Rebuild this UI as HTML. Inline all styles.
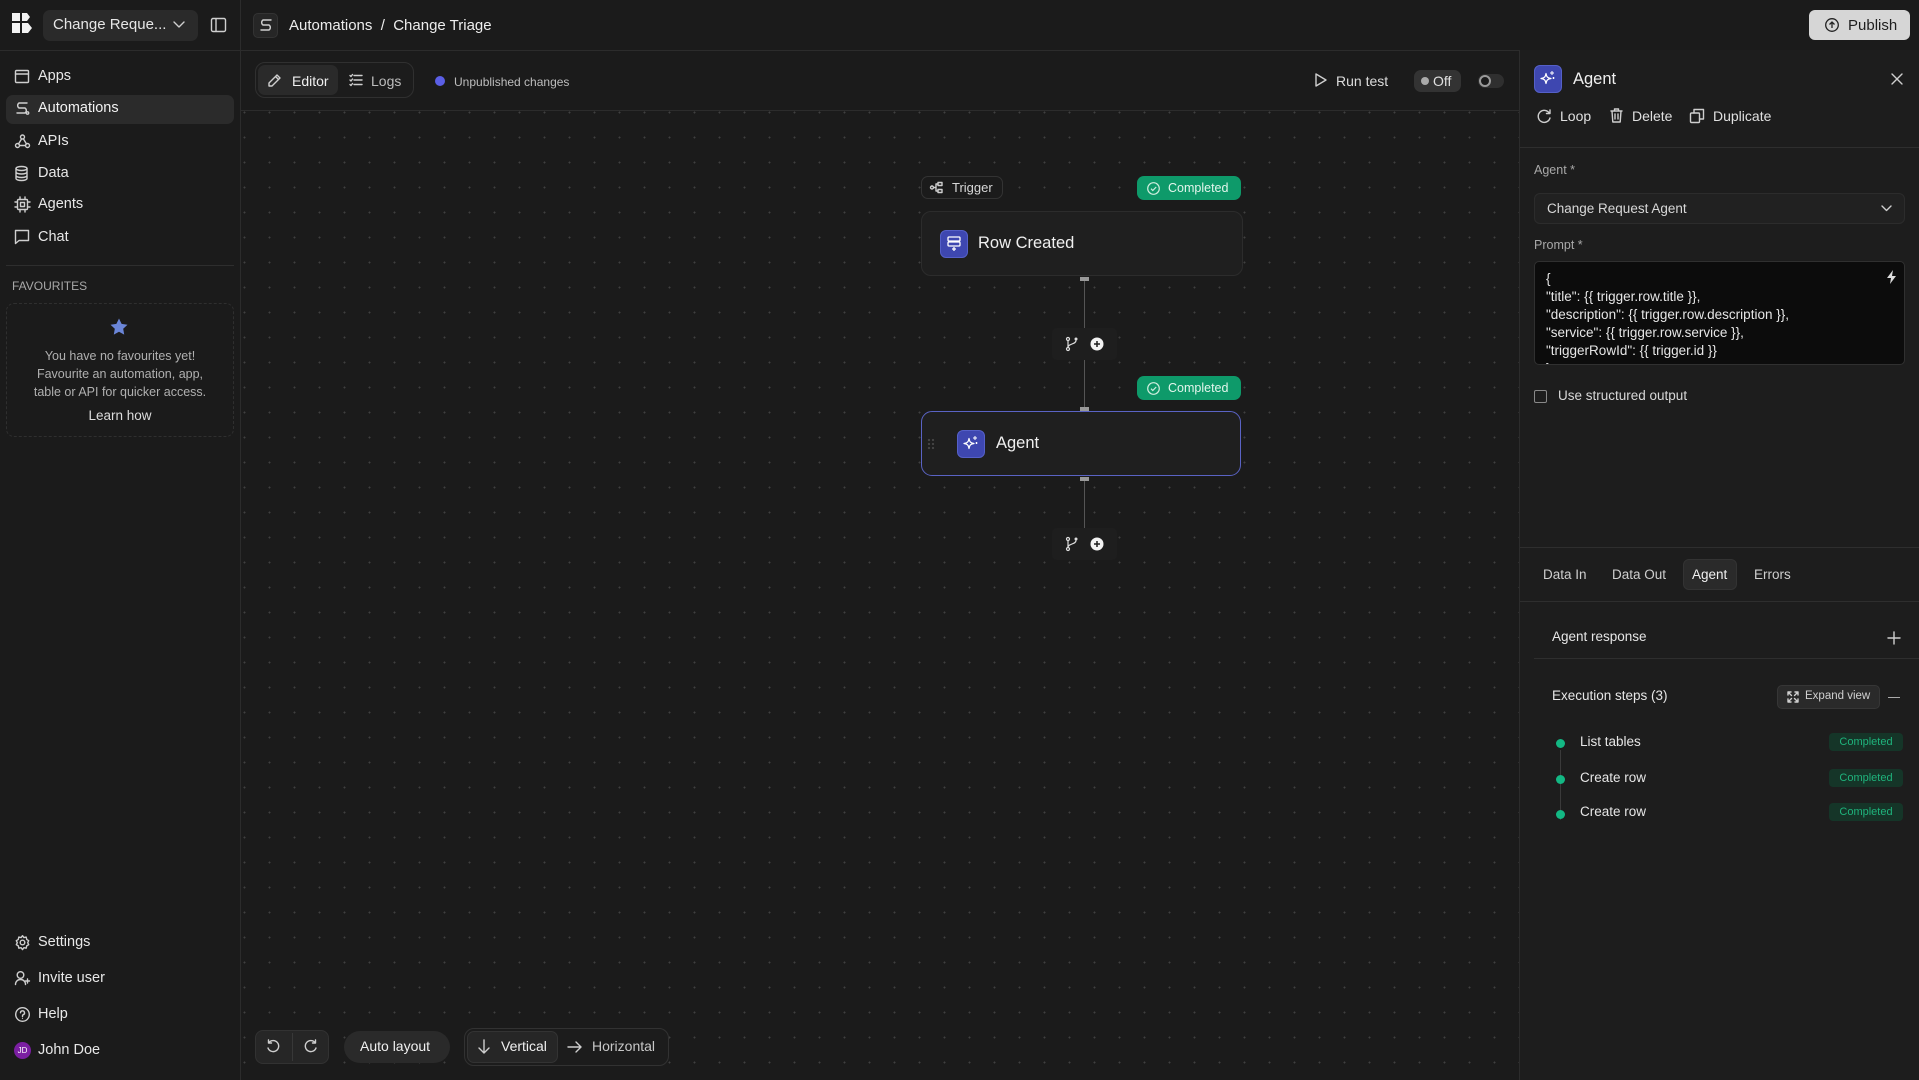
<!DOCTYPE html>
<html><head><meta charset="utf-8"><style>
*{box-sizing:border-box;margin:0;padding:0}
body{width:1919px;height:1080px;background:#1b1b1b;font-family:"Liberation Sans",sans-serif;color:#e8e8e8;position:relative;overflow:hidden}
.a{position:absolute}
.t{position:absolute;white-space:nowrap}
svg{position:absolute;overflow:visible}
.ic{fill:none;stroke:#cfcfcf;stroke-width:1.4;stroke-linecap:round;stroke-linejoin:round}
</style></head><body>
<div class="a" style="left:241px;top:111px;width:1278px;height:969px;background-image:radial-gradient(circle,#404040 0.8px,transparent 1.1px);background-size:25px 25px;background-position:-9px -11px"></div>
<div class="a" style="left:0;top:50px;width:1919px;height:1px;background:#2c2c2c"></div>
<div class="a" style="left:240px;top:0;width:1px;height:1080px;background:#2c2c2c"></div>
<div class="a" style="left:241px;top:110px;width:1278px;height:1px;background:#2c2c2c"></div>
<div class="a" style="left:1519px;top:50px;width:400px;height:1030px;background:#1d1d1d;border-left:1px solid #2c2c2c"></div>

<svg style="left:12px;top:13px" width="20" height="20"><path d="M0 0h8v8H0zM0 10h8v10H0zM10 0h5l3 4-3 4h-5zM10 10h6l4 5-4 5h-6z" fill="#f2f2f2"/></svg>
<div class="a" style="left:43px;top:10px;width:155px;height:31px;background:#2a2a2a;border-radius:7px"></div>
<div class="t" style="left:53px;top:16px;font-size:15px;color:#e6e6e6">Change Reque...</div>
<svg style="left:173px;top:21px" width="12" height="8"><path class="ic" d="M1 1l5 5 5-5"/></svg>
<svg style="left:211px;top:18px" width="15" height="14"><rect class="ic" x="0.5" y="0.5" width="14" height="13" rx="1.5"/><path class="ic" d="M5 1v12"/></svg>
<div class="a" style="left:253px;top:13px;width:25px;height:25px;background:#262626;border:1px solid #333;border-radius:5px"></div>
<svg style="left:259px;top:19px" width="14" height="13"><path class="ic" d="M12 1H4a3 3 0 0 0 0 5h6a3 3 0 0 1 0 5H2"/></svg>
<div class="t" style="left:289px;top:17px;font-size:15px;color:#ededed">Automations &nbsp;/&nbsp; Change Triage</div>
<div class="a" style="left:1809px;top:10px;width:101px;height:30px;background:#d6d6d6;border-radius:6px"></div>
<svg style="left:1825px;top:18px" width="14" height="14"><circle cx="7" cy="7" r="6.3" fill="none" stroke="#222" stroke-width="1.3"/><path d="M7 10V4M4.5 6.5L7 4l2.5 2.5" fill="none" stroke="#222" stroke-width="1.3"/></svg>
<div class="t" style="left:1848px;top:17px;font-size:15px;color:#1e1e1e">Publish</div>

<div class="a" style="left:6px;top:95px;width:228px;height:29px;background:#2b2b2b;border-radius:7px"></div>
<svg style="left:15px;top:70px" width="14" height="13"><rect class="ic" x="0.5" y="0.5" width="13" height="12" rx="1"/><path class="ic" d="M0.5 4h13"/></svg>
<div class="t" style="left:38px;top:68px;font-size:14.5px">Apps</div>
<svg style="left:15px;top:102px" width="14" height="13"><path class="ic" d="M12 1H4a3 3 0 0 0 0 5h6a3 3 0 0 1 0 5H2"/><circle class="ic" cx="12.5" cy="11" r="1.2"/></svg>
<div class="t" style="left:38px;top:100px;font-size:14.5px;color:#f2f2f2">Automations</div>
<svg style="left:15px;top:134px" width="15" height="14"><circle class="ic" cx="7.5" cy="3" r="2"/><circle class="ic" cx="2.5" cy="11.5" r="2"/><circle class="ic" cx="12.5" cy="11.5" r="2"/><path class="ic" d="M6.5 5L3.5 10M8.5 5l3 5M4.5 11.5h6"/></svg>
<div class="t" style="left:38px;top:133px;font-size:14.5px">APIs</div>
<svg style="left:15px;top:166px" width="13" height="15"><ellipse class="ic" cx="6.5" cy="2.5" rx="5.5" ry="2"/><path class="ic" d="M1 2.5v10c0 1.1 2.5 2 5.5 2s5.5-.9 5.5-2v-10M1 6c0 1.1 2.5 2 5.5 2S12 7.1 12 6M1 9.5c0 1.1 2.5 2 5.5 2s5.5-.9 5.5-2"/></svg>
<div class="t" style="left:38px;top:165px;font-size:14.5px">Data</div>
<svg style="left:15px;top:197px" width="15" height="15"><rect class="ic" x="2.5" y="2.5" width="10" height="10" rx="1"/><rect class="ic" x="5.5" y="5.5" width="4" height="4"/><path class="ic" d="M5 0v2.5M10 0v2.5M5 12.5V15M10 12.5V15M0 5h2.5M0 10h2.5M12.5 5H15M12.5 10H15"/></svg>
<div class="t" style="left:38px;top:196px;font-size:14.5px">Agents</div>
<svg style="left:15px;top:230px" width="14" height="14"><path class="ic" d="M0.5 0.5h13v10H4l-3.5 3z"/></svg>
<div class="t" style="left:38px;top:229px;font-size:14.5px">Chat</div>
<div class="a" style="left:6px;top:265px;width:228px;height:1px;background:#2e2e2e"></div>
<div class="t" style="left:12px;top:279px;font-size:12px;color:#a8a8a8">FAVOURITES</div>
<div class="a" style="left:6px;top:303px;width:228px;height:134px;border:1px dashed #2f2f2f;border-radius:8px"></div>
<svg style="left:110px;top:318px" width="18" height="18"><path d="M9 0.5l2.6 5.4 5.9.8-4.3 4.1 1 5.8L9 13.8l-5.2 2.8 1-5.8L.5 6.7l5.9-.8z" fill="#6b86d8"/></svg>
<div class="t" style="left:0;width:240px;text-align:center;top:347px;font-size:12.5px;color:#b0b0b0;line-height:18px">You have no favourites yet!<br>Favourite an automation, app,<br>table or API for quicker access.</div>
<div class="t" style="left:0;width:240px;text-align:center;top:408px;font-size:13.5px;color:#dcdcdc">Learn how</div>
<svg style="left:15px;top:935px" width="15" height="15"><circle class="ic" cx="7.5" cy="7.5" r="2.3"/><path class="ic" d="M7.5 0.7l1.4 1.9 2.3-.5.5 2.3 2 1.3-1 2 1 2-2 1.2-.5 2.3-2.3-.5-1.4 1.9-1.4-1.9-2.3.5-.5-2.3-2-1.2 1-2-1-2 2-1.3.5-2.3 2.3.5z"/></svg>
<div class="t" style="left:38px;top:934px;font-size:14.5px">Settings</div>
<svg style="left:15px;top:971px" width="15" height="14"><circle class="ic" cx="5.5" cy="4" r="3.3"/><path class="ic" d="M0.5 13.5c0-3 2.2-5 5-5s5 2 5 5M12.5 8v4M10.5 10h4"/></svg>
<div class="t" style="left:38px;top:970px;font-size:14.5px">Invite user</div>
<svg style="left:15px;top:1007px" width="15" height="15"><circle class="ic" cx="7.5" cy="7.5" r="6.8"/><path class="ic" d="M5.5 5.8a2 2 0 1 1 2.7 1.9c-.5.2-.7.6-.7 1.1v.7"/><circle cx="7.5" cy="11.3" r=".6" fill="#cfcfcf"/></svg>
<div class="t" style="left:38px;top:1006px;font-size:14.5px">Help</div>
<div class="a" style="left:14px;top:1042px;width:17px;height:17px;border-radius:50%;background:#7b1fa2;font-size:8px;color:#fff;text-align:center;line-height:17px">JD</div>
<div class="t" style="left:38px;top:1042px;font-size:14.5px">John Doe</div>

<div class="a" style="left:255px;top:62px;width:159px;height:36px;border:1px solid #303030;border-radius:10px;background:#1c1c1c"></div>
<div class="a" style="left:258px;top:65px;width:80px;height:30px;background:#2a2a2a;border-radius:7px"></div>
<svg style="left:268px;top:74px" width="13" height="13"><path class="ic" d="M9 1l3 3-8 8H1V9zM7.5 2.5l3 3"/></svg>
<div class="t" style="left:292px;top:73px;font-size:14px;color:#f0f0f0">Editor</div>
<svg style="left:349px;top:74px" width="14" height="12"><path class="ic" d="M5 1.5h8M5 6h8M5 10.5h8M1 1.5l1 1 1.5-2M1 6l1 1 1.5-2M1 10.5l1 1 1.5-2" stroke="#9a9a9a"/></svg>
<div class="t" style="left:371px;top:73px;font-size:14px;color:#bdbdbd">Logs</div>
<div class="a" style="left:435px;top:76px;width:10px;height:10px;border-radius:50%;background:#5b5fe6"></div>
<div class="t" style="left:454px;top:75px;font-size:12px;color:#bdbdbd">Unpublished changes</div>
<svg style="left:1315px;top:73px" width="12" height="14"><path class="ic" d="M1 1l10 6-10 6z" stroke="#9a9a9a"/></svg>
<div class="t" style="left:1336px;top:73px;font-size:14px;color:#dcdcdc">Run test</div>
<div class="a" style="left:1414px;top:70px;width:47px;height:22px;background:#333;border-radius:7px"></div>
<div class="a" style="left:1421px;top:77px;width:8px;height:8px;border-radius:50%;background:#aaa"></div>
<div class="t" style="left:1433px;top:73px;font-size:14px;color:#e0e0e0">Off</div>
<div class="a" style="left:1478px;top:74px;width:26px;height:14px;background:#2f2f2f;border-radius:7px"></div>
<div class="a" style="left:1479px;top:75px;width:12px;height:12px;border:2px solid #9a9a9a;border-radius:50%;background:#1b1b1b"></div>

<div class="a" style="left:921px;top:176px;width:82px;height:23px;border:1px solid #333;border-radius:7px;background:#1b1b1b"></div>
<svg style="left:930px;top:182px" width="13" height="11"><circle class="ic" cx="2" cy="5.5" r="1.5" stroke="#999"/><rect class="ic" x="8" y="0.5" width="4" height="3" stroke="#999"/><rect class="ic" x="8" y="7.5" width="4" height="3" stroke="#999"/><path class="ic" d="M3.5 5.5h2.5M6 2v7M6 2h2M6 9h2" stroke="#999"/></svg>
<div class="t" style="left:952px;top:180px;font-size:13px;color:#d8d8d8">Trigger</div>
<div class="a" style="left:1137px;top:176px;width:104px;height:24px;background:#0e9a6a;border-radius:7px"></div>
<svg style="left:1147px;top:182px" width="13" height="13"><circle cx="6.5" cy="6.5" r="5.8" fill="none" stroke="#cfeede" stroke-width="1.2"/><path d="M4 6.7l1.8 1.8L9.2 5" fill="none" stroke="#cfeede" stroke-width="1.2"/></svg>
<div class="t" style="left:1168px;top:181px;font-size:12.5px;color:#e2f5ec">Completed</div>
<div class="a" style="left:921px;top:211px;width:322px;height:65px;background:#1f1f1f;border:1px solid #2c2c2c;border-radius:10px"></div>
<div class="a" style="left:940px;top:230px;width:28px;height:28px;background:#3e47b0;border-radius:6px;border:1px solid #5560c8"></div>
<svg style="left:947px;top:236px" width="14" height="15"><rect x="1" y="1" width="12" height="4" rx="1" fill="none" stroke="#fff" stroke-width="1.3"/><rect x="1" y="6" width="12" height="4" rx="1" fill="none" stroke="#fff" stroke-width="1.3"/><path d="M7 11v4M5 13h4" stroke="#fff" stroke-width="1.3"/></svg>
<div class="t" style="left:978px;top:234px;font-size:16.5px;color:#f0f0f0">Row Created</div>
<div class="a" style="left:1084px;top:277px;width:1px;height:134px;background:#555"></div>
<div class="a" style="left:1080px;top:277px;width:9px;height:4px;background:#999"></div>
<div class="a" style="left:1052px;top:328px;width:65px;height:32px;background:#1e1e1e;border-radius:5px"></div>
<svg style="left:1066px;top:337px" width="12" height="14"><circle cx="2" cy="2" r="1.5" fill="none" stroke="#ddd" stroke-width="1.2"/><circle cx="2" cy="12" r="1.5" fill="none" stroke="#ddd" stroke-width="1.2"/><circle cx="10" cy="2" r="1.5" fill="#ddd"/><path d="M2 3.5v7M10 3.5c0 4-8 3-8 7" fill="none" stroke="#ddd" stroke-width="1.2"/></svg>
<svg style="left:1090px;top:337px" width="14" height="14"><circle cx="7" cy="7" r="6.5" fill="#f2f2f2"/><path d="M7 4v6M4 7h6" stroke="#1b1b1b" stroke-width="1.5"/></svg>
<div class="a" style="left:1137px;top:376px;width:104px;height:24px;background:#0e9a6a;border-radius:7px"></div>
<svg style="left:1147px;top:382px" width="13" height="13"><circle cx="6.5" cy="6.5" r="5.8" fill="none" stroke="#cfeede" stroke-width="1.2"/><path d="M4 6.7l1.8 1.8L9.2 5" fill="none" stroke="#cfeede" stroke-width="1.2"/></svg>
<div class="t" style="left:1168px;top:381px;font-size:12.5px;color:#e2f5ec">Completed</div>
<div class="a" style="left:1080px;top:407px;width:9px;height:4px;background:#999"></div>
<div class="a" style="left:921px;top:411px;width:320px;height:65px;background:#1f1f1f;border:1.5px solid #5a63c4;border-radius:11px"></div>
<div class="a" style="left:927px;top:438px;width:8px;height:12px;background-image:radial-gradient(circle,#444 1px,transparent 1.3px);background-size:4px 4px"></div>
<div class="a" style="left:957px;top:430px;width:28px;height:28px;background:#3e47b0;border-radius:6px;border:1px solid #5560c8"></div>
<svg style="left:962px;top:435px" width="18" height="18"><path d="M7 3.5c.6 3.5 1.5 4.4 5 5-3.5.6-4.4 1.5-5 5-.6-3.5-1.5-4.4-5-5 3.5-.6 4.4-1.5 5-5z" fill="none" stroke="#fff" stroke-width="1.2" stroke-linejoin="round"/><path d="M13 1v4M11 3h4M14.5 7v2M13.5 8h2" stroke="#fff" stroke-width="1"/></svg>
<div class="t" style="left:996px;top:434px;font-size:16.5px;color:#f0f0f0">Agent</div>
<div class="a" style="left:1080px;top:477px;width:9px;height:4px;background:#999"></div>
<div class="a" style="left:1084px;top:481px;width:1px;height:47px;background:#555"></div>
<div class="a" style="left:1052px;top:528px;width:65px;height:32px;background:#1e1e1e;border-radius:5px"></div>
<svg style="left:1066px;top:537px" width="12" height="14"><circle cx="2" cy="2" r="1.5" fill="none" stroke="#ddd" stroke-width="1.2"/><circle cx="2" cy="12" r="1.5" fill="none" stroke="#ddd" stroke-width="1.2"/><circle cx="10" cy="2" r="1.5" fill="#ddd"/><path d="M2 3.5v7M10 3.5c0 4-8 3-8 7" fill="none" stroke="#ddd" stroke-width="1.2"/></svg>
<svg style="left:1090px;top:537px" width="14" height="14"><circle cx="7" cy="7" r="6.5" fill="#f2f2f2"/><path d="M7 4v6M4 7h6" stroke="#1b1b1b" stroke-width="1.5"/></svg>

<div class="a" style="left:255px;top:1030px;width:74px;height:34px;background:#262626;border:1px solid #323232;border-radius:8px"></div>
<div class="a" style="left:292px;top:1033px;width:1px;height:28px;background:#383838"></div>
<svg style="left:266px;top:1039px" width="15" height="15"><path class="ic" d="M3 3.5A5.5 5.5 0 1 1 2 9M2.5 1v3h3" stroke="#999"/></svg>
<svg style="left:303px;top:1039px" width="15" height="15"><path class="ic" d="M12 3.5A5.5 5.5 0 1 0 13 9M12.5 1v3h-3" stroke="#999"/></svg>
<div class="a" style="left:344px;top:1031px;width:106px;height:32px;background:#2a2a2a;border-radius:16px"></div>
<div class="t" style="left:360px;top:1038px;font-size:14px;color:#f0f0f0">Auto layout</div>
<div class="a" style="left:464px;top:1028px;width:205px;height:38px;border:1px solid #323232;border-radius:10px;background:#1c1c1c"></div>
<div class="a" style="left:467px;top:1031px;width:91px;height:32px;background:#262626;border:1px solid #333;border-radius:7px"></div>
<svg style="left:478px;top:1039px" width="12" height="15"><path class="ic" d="M6 1v13M1 9l5 5 5-5"/></svg>
<div class="t" style="left:501px;top:1038px;font-size:14px;color:#f0f0f0">Vertical</div>
<svg style="left:567px;top:1041px" width="15" height="12"><path class="ic" d="M1 6h13M9 1l5 5-5 5" stroke="#999"/></svg>
<div class="t" style="left:592px;top:1038px;font-size:14px;color:#c8c8c8">Horizontal</div>

<div class="a" style="left:1534px;top:65px;width:28px;height:28px;background:#3e47b0;border-radius:6px;border:1px solid #5560c8"></div>
<svg style="left:1539px;top:70px" width="18" height="18"><path d="M7 3.5c.6 3.5 1.5 4.4 5 5-3.5.6-4.4 1.5-5 5-.6-3.5-1.5-4.4-5-5 3.5-.6 4.4-1.5 5-5z" fill="none" stroke="#fff" stroke-width="1.2" stroke-linejoin="round"/><path d="M13 1v4M11 3h4M14.5 7v2M13.5 8h2" stroke="#fff" stroke-width="1"/></svg>
<div class="t" style="left:1573px;top:70px;font-size:16.5px;color:#f0f0f0">Agent</div>
<svg style="left:1891px;top:73px" width="12" height="12"><path class="ic" d="M1 1l10 10M11 1L1 11"/></svg>
<svg style="left:1537px;top:109px" width="14" height="14"><path class="ic" d="M12.5 4.5A6 6 0 1 0 13 9M13 1v3.5H9.5" stroke="#999"/></svg>
<div class="t" style="left:1560px;top:108px;font-size:14px;color:#e0e0e0">Loop</div>
<svg style="left:1610px;top:108px" width="13" height="15"><path class="ic" d="M1 3h11M4.5 3V1h4v2M2 3l.8 11h7.4L11 3M5 6v5M8 6v5" stroke="#999"/></svg>
<div class="t" style="left:1632px;top:108px;font-size:14px;color:#e0e0e0">Delete</div>
<svg style="left:1690px;top:109px" width="14" height="14"><rect class="ic" x="0.5" y="4" width="9" height="9.5" rx="1" stroke="#999"/><path class="ic" d="M4 4V0.5h9.5V10H9.5" stroke="#999"/></svg>
<div class="t" style="left:1713px;top:108px;font-size:14px;color:#e0e0e0">Duplicate</div>
<div class="a" style="left:1520px;top:147px;width:399px;height:1px;background:#2e2e2e"></div>
<div class="t" style="left:1534px;top:163px;font-size:12.5px;color:#a8a8a8">Agent *</div>
<div class="a" style="left:1534px;top:193px;width:371px;height:31px;background:#212121;border:1px solid #2c2c2c;border-radius:6px"></div>
<div class="t" style="left:1547px;top:201px;font-size:13.5px;color:#d8d8d8">Change Request Agent</div>
<svg style="left:1881px;top:205px" width="11" height="7"><path class="ic" d="M1 1l4.5 4.5L10 1"/></svg>
<div class="t" style="left:1534px;top:238px;font-size:12.5px;color:#a8a8a8">Prompt *</div>
<div class="a" style="left:1534px;top:261px;width:371px;height:104px;background:#0c0c0c;border:1px solid #303030;border-radius:5px;overflow:hidden">
<div style="position:absolute;left:11px;top:8px;font-size:13.5px;line-height:18px;color:#e6e6e6;white-space:pre">{
"title": {{ trigger.row.title }},
"description": {{ trigger.row.description }},
"service": {{ trigger.row.service }},
"triggerRowId": {{ trigger.id }}
}</div></div>
<svg style="left:1887px;top:270px" width="10" height="14"><path d="M6 0L0 8h4l-1 6 6-8H5z" fill="#ddd"/></svg>
<div class="a" style="left:1534px;top:390px;width:13px;height:13px;border:1.5px solid #888;border-radius:2px"></div>
<div class="t" style="left:1558px;top:388px;font-size:13.5px;color:#d8d8d8">Use structured output</div>

<div class="a" style="left:1520px;top:547px;width:399px;height:1px;background:#2e2e2e"></div>
<div class="t" style="left:1543px;top:567px;font-size:13.5px;color:#cfcfcf">Data In</div>
<div class="t" style="left:1612px;top:567px;font-size:13.5px;color:#cfcfcf">Data Out</div>
<div class="a" style="left:1683px;top:559px;width:54px;height:31px;background:#2a2a2a;border:1px solid #333;border-radius:6px"></div>
<div class="t" style="left:1692px;top:567px;font-size:13.5px;color:#f0f0f0">Agent</div>
<div class="t" style="left:1754px;top:567px;font-size:13.5px;color:#cfcfcf">Errors</div>
<div class="a" style="left:1520px;top:601px;width:399px;height:1px;background:#2e2e2e"></div>
<div class="t" style="left:1552px;top:629px;font-size:13.5px;color:#e6e6e6">Agent response</div>
<svg style="left:1888px;top:632px" width="12" height="12"><path class="ic" d="M6 0v12M0 6h12" stroke="#aaa"/></svg>
<div class="a" style="left:1534px;top:658px;width:385px;height:1px;background:#2e2e2e"></div>
<div class="t" style="left:1552px;top:688px;font-size:13.5px;color:#e6e6e6">Execution steps (3)</div>
<div class="a" style="left:1777px;top:685px;width:103px;height:24px;background:#2a2a2a;border:1px solid #363636;border-radius:5px"></div>
<svg style="left:1787px;top:691px" width="12" height="12"><path class="ic" d="M1 4V1h3M8 1h3v3M11 8v3H8M4 11H1V8M1 1l3.5 3.5M11 1L7.5 4.5M11 11L7.5 7.5M1 11l3.5-3.5" stroke="#aaa" stroke-width="1.1"/></svg>
<div class="t" style="left:1805px;top:690px;font-size:11.5px;color:#d0d0d0">Expand view</div>
<div class="a" style="left:1888px;top:697px;width:12px;height:1.4px;background:#aaa"></div>
<div class="a" style="left:1560px;top:750px;width:1px;height:70px;background:#3a3a3a"></div>
<div class="a" style="left:1556px;top:739px;width:9px;height:9px;border-radius:50%;background:#13b884"></div>
<div class="a" style="left:1556px;top:775px;width:9px;height:9px;border-radius:50%;background:#13b884"></div>
<div class="a" style="left:1556px;top:810px;width:9px;height:9px;border-radius:50%;background:#13b884"></div>
<div class="t" style="left:1580px;top:734px;font-size:13.5px;color:#e6e6e6">List tables</div>
<div class="t" style="left:1580px;top:770px;font-size:13.5px;color:#e6e6e6">Create row</div>
<div class="t" style="left:1580px;top:804px;font-size:13.5px;color:#e6e6e6">Create row</div>
<div class="a" style="left:1829px;top:733px;width:74px;height:18px;background:#153528;border-radius:4px;font-size:11px;color:#1fb37c;text-align:center;line-height:18px">Completed</div>
<div class="a" style="left:1829px;top:769px;width:74px;height:18px;background:#153528;border-radius:4px;font-size:11px;color:#1fb37c;text-align:center;line-height:18px">Completed</div>
<div class="a" style="left:1829px;top:803px;width:74px;height:18px;background:#153528;border-radius:4px;font-size:11px;color:#1fb37c;text-align:center;line-height:18px">Completed</div>
</body></html>
